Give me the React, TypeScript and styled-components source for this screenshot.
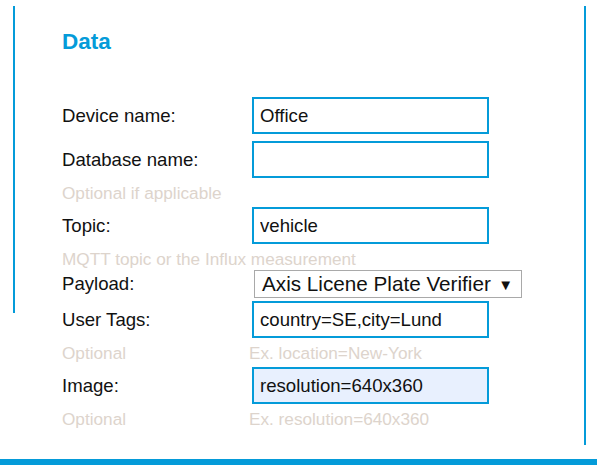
import React from 'react'
import styled, { createGlobalStyle } from 'styled-components'

const BLUE = '#049bd9'

const GlobalStyle = createGlobalStyle`
  html, body {
    margin: 0;
    padding: 0;
    background: #fff;
    font-family: "Liberation Sans", Arial, sans-serif;
  }
`

const Page = styled.div`
  width: 597px;
  height: 471px;
  overflow: hidden;
  padding-top: 6px;
  box-sizing: border-box;
`

const Panel = styled.div`
  display: flex;
  align-items: flex-start;
`

const Rule = styled.div<{ $height: number }>`
  flex: none;
  width: 2px;
  height: ${(p) => p.$height}px;
  background: ${BLUE};
`

const LeftRule = styled(Rule)`
  margin-left: 13px;
`

const RightRule = styled(Rule)`
  margin-right: 11px;
`

const Content = styled.div`
  flex: 1;
  padding: 23px 0 0 47px;
  display: flex;
  flex-direction: column;
`

const Heading = styled.h2`
  margin: 0 0 43px;
  font-size: 22.5px;
  line-height: 25px;
  font-weight: bold;
  color: ${BLUE};
`

const Row = styled.div<{ $gap?: number }>`
  display: flex;
  align-items: center;
  margin-top: ${(p) => p.$gap ?? 0}px;
`

const Label = styled.label`
  width: 190px;
  flex: none;
  font-size: 18.6px;
  color: #111;
`

const Input = styled.input<{ $filled?: boolean }>`
  width: 237px;
  height: 37px;
  box-sizing: border-box;
  border: 2px solid ${BLUE};
  border-radius: 0;
  padding: 0 6px;
  margin: 0;
  font-family: "Liberation Sans", Arial, sans-serif;
  font-size: 18.6px;
  color: #111;
  background: ${(p) => (p.$filled ? '#e8f0fe' : '#fff')};
  outline: none;
`

const SelectBox = styled.div`
  margin-left: 2px;
  width: 268px;
  height: 28px;
  box-sizing: border-box;
  border: 1px solid #a9a9a9;
  display: flex;
  align-items: center;
  justify-content: space-between;
  padding: 0 8px 0 7px;
  font-size: 20.7px;
  color: #111;
  background: #fff;
`

const Arrow = styled.span`
  font-size: 15px;
  color: #111;
`

const Hint = styled.div<{ $height: number }>`
  display: flex;
  height: ${(p) => p.$height}px;
  padding-top: 5px;
  box-sizing: border-box;
  font-size: 17.2px;
  line-height: 20px;
  color: #ddd4cc;
  white-space: nowrap;
`

const HintCell = styled.span`
  width: 187px;
  flex: none;
`

export default function App() {
  return (
    <Page>
      <GlobalStyle />
      <Panel>
        <LeftRule $height={307} />
        <Content>
          <Heading>Data</Heading>

          <Row>
            <Label>Device name:</Label>
            <Input defaultValue="Office" />
          </Row>
          <Row $gap={7}>
            <Label>Database name:</Label>
            <Input defaultValue="" />
          </Row>
          <Hint $height={29}>Optional if applicable</Hint>
          <Row>
            <Label>Topic:</Label>
            <Input defaultValue="vehicle" />
          </Row>
          <Hint $height={26}>MQTT topic or the Influx measurement</Hint>
          <Row>
            <Label>Payload:</Label>
            <SelectBox>
              <span>Axis Licene Plate Verifier</span>
              <Arrow>▼</Arrow>
            </SelectBox>
          </Row>
          <Row $gap={3}>
            <Label>User Tags:</Label>
            <Input defaultValue="country=SE,city=Lund" />
          </Row>
          <Hint $height={29}>
            <HintCell>Optional</HintCell>
            <span>Ex. location=New-York</span>
          </Hint>
          <Row>
            <Label>Image:</Label>
            <Input $filled defaultValue="resolution=640x360" />
          </Row>
          <Hint $height={29}>
            <HintCell>Optional</HintCell>
            <span>Ex. resolution=640x360</span>
          </Hint>
        </Content>
        <RightRule $height={439} />
      </Panel>
      <BottomBar />
    </Page>
  )
}

const BottomBar = styled.div`
  margin-top: 14px;
  height: 6px;
  background: ${BLUE};
`
